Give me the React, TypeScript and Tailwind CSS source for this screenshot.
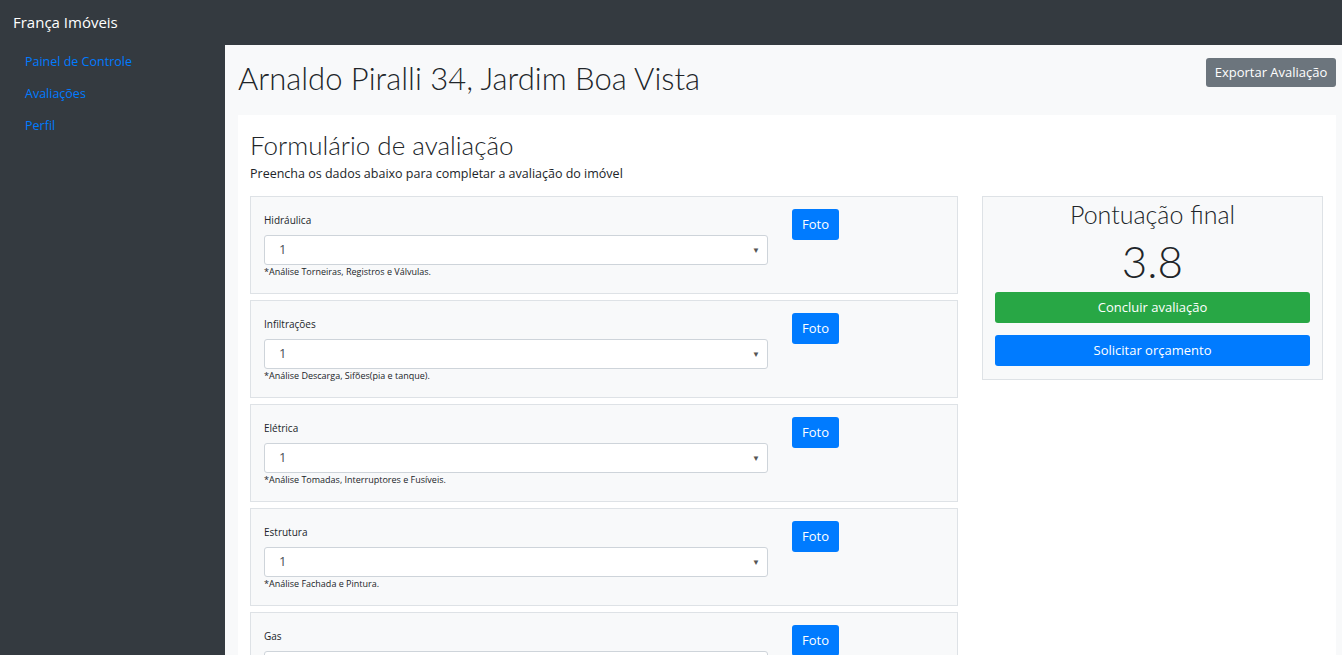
import React from "react";

const items = [
  { label: "Hidráulica", note: "*Análise Torneiras, Registros e Válvulas." },
  { label: "Infiltrações", note: "*Análise Descarga, Sifões(pia e tanque)." },
  { label: "Elétrica", note: "*Análise Tomadas, Interruptores e Fusíveis." },
  { label: "Estrutura", note: "*Análise Fachada e Pintura." },
  { label: "Gas", note: "*Análise Registro e Mangueira." },
];

const light = "font-['Lato','Open_Sans',sans-serif] font-light";

function Item({ label, note }: { label: string; note: string }) {
  return (
    <div className="flex h-[98px] shrink-0 border border-[#dee2e6] bg-[#f8f9fa] pl-[13px] pt-[12px]">
      <div className="w-[504px] pt-[4px]">
        <div className="text-[10px] leading-[14px] text-[#212529]">{label}</div>
        <div className="mt-[8px] flex h-[30px] items-center justify-between rounded-[3px] border border-[#ced4da] bg-white pl-[14px] pr-[7px]">
          <span className="text-[13px] text-[#495057]">1</span>
          <span className="text-[8px] text-[#555]">▼</span>
        </div>
        <div className="mt-[1px] text-[9px] leading-[12px] text-[#212529]">{note}</div>
      </div>
      <div className="ml-[24px]">
        <button className="h-[31px] w-[47px] rounded-[3px] bg-[#007bff] text-[13px] text-white">Foto</button>
      </div>
    </div>
  );
}

export default function App() {
  return (
    <div className="flex h-screen flex-col overflow-hidden bg-[#343a40] font-['Open_Sans',sans-serif]">
      <div className="flex h-[45px] shrink-0 items-center pl-[13px] text-[15px] text-white">França Imóveis</div>
      <div className="flex min-h-0 flex-1">
        <nav className="flex w-[225px] shrink-0 flex-col gap-[13px] pl-[25px] pt-[7px] text-[12.5px] text-[#007bff]">
          <a className="leading-[19px]">Painel de Controle</a>
          <a className="leading-[19px]">Avaliações</a>
          <a className="leading-[19px]">Perfil</a>
        </nav>
        <main className="flex-1 bg-[#f8f9fa] pl-[13px] pr-[6px]">
          <div className="flex h-[70px] items-start justify-between">
            <h1 className={`mt-[13px] text-[31px] leading-[40px] text-[#212529] ${light}`}>Arnaldo Piralli 34, Jardim Boa Vista</h1>
            <button className="mt-[13px] h-[29px] w-[130px] rounded-[3px] bg-[#6c757d] text-[13px] text-white">Exportar Avaliação</button>
          </div>
          <div className="bg-white px-[12px] pt-[14px]">
            <h2 className={`text-[26px] leading-[32px] text-[#212529] ${light}`}>Formulário de avaliação</h2>
            <p className="mt-[4px] text-[12.5px] leading-[18px] text-[#212529]">Preencha os dados abaixo para completar a avaliação do imóvel</p>
            <div className="mt-[13px] flex gap-[24px]">
              <div className="flex w-[708px] flex-col gap-[6px]">
                {items.map((it) => (
                  <Item key={it.label} label={it.label} note={it.note} />
                ))}
              </div>
              <div className="h-[184px] w-[341px] border border-[#dee2e6] bg-[#f8f9fa] px-[12px]">
                <div className={`mt-[1px] text-center text-[25px] leading-[32px] text-[#212529] ${light}`}>Pontuação final</div>
                <div className={`mt-[4px] text-center text-[44px] leading-[54px] text-[#212529] ${light}`}>3.8</div>
                <button className="mt-[4px] h-[31px] w-full rounded-[3px] bg-[#28a745] text-[13px] text-white">Concluir avaliação</button>
                <button className="mt-[12px] h-[31px] w-full rounded-[3px] bg-[#007bff] text-[13px] text-white">Solicitar orçamento</button>
              </div>
            </div>
          </div>
        </main>
      </div>
    </div>
  );
}
